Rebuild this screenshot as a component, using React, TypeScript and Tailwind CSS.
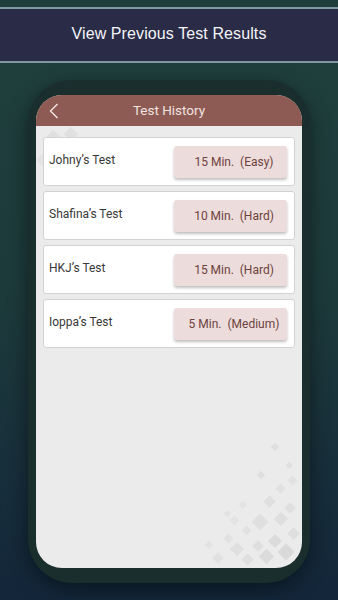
import React from "react";

const rows = [
  { name: "Johny\u2019s Test", dur: "15 Min.", level: "(Easy)" },
  { name: "Shafina\u2019s Test", dur: "10 Min.", level: "(Hard)" },
  { name: "HKJ\u2019s Test", dur: "15 Min.", level: "(Hard)" },
  { name: "Ioppa\u2019s Test", dur: "5 Min.", level: "(Medium)" },
];

const diamonds: [number, number, number, number][] = [
  [10, 10, 12, 0.22], [22, 22, 10, 0.2], [4, 30, 9, 0.16], [30, 6, 11, 0.2], [40, 18, 8, 0.16],
  [16, 44, 10, 0.16], [50, 4, 9, 0.14], [60, 14, 10, 0.14], [8, 56, 8, 0.14], [28, 62, 9, 0.14],
  [70, 26, 7, 0.12], [36, 40, 12, 0.14], [80, 6, 8, 0.12], [52, 34, 7, 0.12], [18, 76, 7, 0.12],
  [38, 90, 6, 0.14], [56, 60, 6, 0.1], [64, 44, 7, 0.1], [10, 100, 5, 0.14], [90, 20, 6, 0.1],
  [24, 118, 6, 0.14], [6, 84, 7, 0.12], [72, 52, 5, 0.12],
];

export default function App() {
  return (
    <div
      className="relative w-[338px] h-[600px] overflow-hidden"
      style={{ fontFamily: "Roboto, 'Liberation Sans', sans-serif" }}
    >
      <div className="absolute inset-0 bg-gradient-to-b from-[#1f403d] via-[#1d3a3b] to-[#13263a]" />
      <div className="relative flex flex-col h-full">
        <div className="h-[7px] bg-[#1f3d3b]" />
        <div className="h-[2px] bg-[#8198a0]" />
        <div className="h-[52px] bg-[#2a2c47] flex items-center justify-center">
          <span
            className="text-[16px] text-[#f4f4f8] -mt-[3px] tracking-[0.1px]"
            style={{ fontFamily: "'Liberation Sans', Arial, sans-serif" }}
          >
            View Previous Test Results
          </span>
        </div>
        <div className="h-[2px] bg-[#8198a0]" />
        <div className="flex-1 flex justify-center pt-[17px]">
          <div className="w-[282px] h-[503px] rounded-[44px] bg-[#1a2e2d] pt-[15px] px-[8px] shadow-[0_6px_20px_rgba(0,0,0,0.45)]">
            <div className="relative w-[266px] h-[473px] rounded-t-[26px] rounded-b-[26px] bg-[#ebebeb] overflow-hidden flex flex-col">
              {diamonds.map(([r, b, s, o], i) => (
                <div
                  key={i}
                  className="absolute rotate-45 bg-[#9a9a9a]"
                  style={{ right: r, bottom: b, width: s, height: s, opacity: o }}
                />
              ))}
              <div className="absolute left-[10px] top-[38px] w-[14px] h-[14px] rotate-45 bg-[#cfcfcf] opacity-40" />
              <div className="absolute left-[30px] top-[34px] w-[10px] h-[10px] rotate-45 bg-[#cfcfcf] opacity-40" />
              <div className="absolute left-[2px] top-[60px] w-[10px] h-[10px] rotate-45 bg-[#d5d5d5] opacity-40" />

              <div className="relative h-[31px] bg-[#8d5b53] flex items-center justify-center shrink-0">
                <svg
                  className="absolute left-[13px] top-[8px]"
                  width="10"
                  height="16"
                  viewBox="0 0 10 16"
                  fill="none"
                >
                  <path d="M8.5 1 L1.5 8 L8.5 15" stroke="#f3e6e4" strokeWidth="1.4" />
                </svg>
                <span className="text-[13.5px] text-[#f2e3e1]">Test History</span>
              </div>
              <div className="relative flex flex-col gap-[5px] pt-[11px] px-[7px]">
                {rows.map((r) => (
                  <div
                    key={r.name}
                    className="h-[49px] bg-white border border-[#d3d3d3] rounded-[3px] flex items-center justify-between pl-[5px] pr-[7px]"
                  >
                    <span className="text-[12px] text-[#383838] -mt-[3px]">{r.name}</span>
                    <div className="w-[113px] h-[32px] rounded-[3px] bg-[#ecdcdb] shadow-[0_2px_3px_rgba(0,0,0,0.25)] flex items-center justify-center pl-[7px]">
                      <span className="text-[12px] text-[#6e423d] whitespace-pre">
                        {r.dur}  {r.level}
                      </span>
                    </div>
                  </div>
                ))}
              </div>
            </div>
          </div>
        </div>
      </div>
    </div>
  );
}
